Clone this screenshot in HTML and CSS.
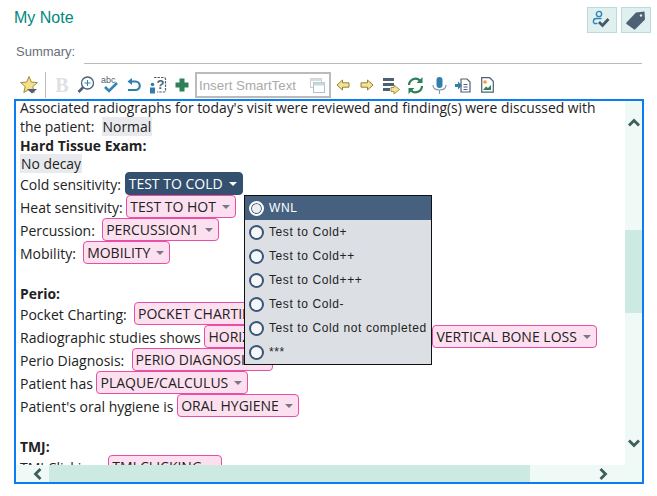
FILE: index.html
```html
<!DOCTYPE html>
<html lang="en">
<head>
    <meta charset="UTF-8">
    <meta name="viewport" content="width=device-width, initial-scale=1.0">
    <title>My Note</title>
    <link rel="stylesheet" href="styles.css">
</head>
<body>

    <header class="note-header">
        <h1>My Note</h1>
        <div class="header-actions">
            <button class="header-btn" type="button">
                <svg width="20" height="20" viewBox="0 0 20 20"><circle cx="7" cy="4" r="2.6" fill="none" stroke="#2f86b5" stroke-width="1.4"/><path d="M1.500 13v-2Q1.500 8.500 4.500 8.500h5" fill="none" stroke="#2f86b5" stroke-width="1.4"/><path d="M1.500 13.500h4" stroke="#2f86b5" stroke-width="1.4"/><path d="M7 12l3.500 3.500 6-6.500" fill="none" stroke="#44566b" stroke-width="2.800"/></svg>
            </button>
            <button class="header-btn" type="button">
                <svg width="22" height="22" viewBox="0 0 22 22"><path d="M1.500 13.500L11 3.500l8.500-1 .5 8-9.500 9.500q-1 1-2 0L1.500 15q-.8-.8 0-1.500z" fill="#4d6076"/><circle cx="16" cy="6.500" r="1.200" fill="#dff0ee"/></svg>
            </button>
        </div>
    </header>

    <div class="summary">
        <label>Summary:</label>
        <div class="summary-line"></div>
    </div>

    <div class="toolbar">
        <span class="tool"><svg width="20" height="20" viewBox="0 0 20 20"><path d="M10 1.500l2.400 5.600 6 .5-4.600 4 1.400 5.900L10 14.400l-5.200 3.100 1.400-5.900-4.600-4 6-.5z" fill="#f5e08a" stroke="#a08c3c"/><path d="M8 14h10l-5 4.500z" fill="#4d6076"/></svg></span>
        <span class="tool-sep"></span>
        <span class="tool tool-bold">B</span>
        <span class="tool"><svg width="18" height="18" viewBox="0 0 18 18"><circle cx="10.500" cy="7" r="6" fill="#fff" stroke="#4d6076" stroke-width="1.300"/><path d="M10.500 4v6M7.500 7h6" stroke="#2f86b5" stroke-width="1.100"/><path d="M6 11.500l-4.500 4.500" stroke="#4d6076" stroke-width="2.600"/></svg></span>
        <span class="tool"><svg width="18" height="20" viewBox="0 0 18 20"><text x="0" y="8" class="abc">abc</text><path d="M4 12l4 4 8-8" fill="none" stroke="#2f86b5" stroke-width="2.600"/></svg></span>
        <span class="tool"><svg width="16" height="16" viewBox="0 0 16 16"><path d="M6 1L1.500 4.500 6 8z" fill="#2f7fae"/><path d="M5 4.500h4.500a4 4 0 010 8.500H2" fill="none" stroke="#2f7fae" stroke-width="2.200"/></svg></span>
        <span class="tool"><svg width="18" height="18" viewBox="0 0 18 18"><path d="M5 1.500h10q1.500 0 1.500 1.500v11.500q0 1.500-1.500 1.500H8" fill="none" stroke="#4d6076" stroke-width="1.200" stroke-dasharray="2.500 1"/><text x="7.500" y="13" class="help">?</text><circle cx="3.500" cy="8.500" r="1.800" fill="#2f7fae"/><path d="M1 11.500h5v6H1z" fill="#2f7fae"/></svg></span>
        <span class="tool"><svg width="14" height="14" viewBox="0 0 14 14"><path d="M4.500 .5h5v4h4v5h-4v4h-5v-4h-4v-5h4z" fill="#2f8058"/></svg></span>

        <div class="smart-input">
            <span class="smart-text">Insert SmartText</span>
            <svg width="15" height="15" viewBox="0 0 15 15"><rect x=".5" y=".5" width="11" height="9" fill="none" stroke="#e6c4bd"/><rect x=".5" y=".5" width="11" height="2.500" fill="#cfe2d8"/><rect x="3.500" y="4.500" width="11" height="10" fill="#fff" stroke="#a9c3d3"/><rect x="3.500" y="4.500" width="11" height="3" fill="#c4d8e4"/></svg>
        </div>

        <span class="tool"><svg width="14" height="12" viewBox="0 0 14 12"><path d="M6.500 1L1 6l5.500 5V8.200h6.500V3.800H6.500z" fill="#f3e39a" stroke="#97802f"/></svg></span>
        <span class="tool"><svg width="14" height="12" viewBox="0 0 14 12"><path d="M7.500 1L13 6l-5.500 5V8.200H1V3.800h6.500z" fill="#f3e39a" stroke="#97802f"/></svg></span>
        <span class="tool"><svg width="17" height="17" viewBox="0 0 17 17"><path d="M0 1h11v3H0zM0 6h11v3H0zM0 11h7v3H0z" fill="#4d6076"/><path d="M11 8l5.500 4.500L11 17v-2.500H8v-4h3z" fill="#f3e39a" stroke="#97802f" stroke-width=".8"/></svg></span>
        <span class="tool"><svg width="17" height="17" viewBox="0 0 17 17"><path d="M2 8a6.500 6.500 0 0111-4.500M15 9a6.500 6.500 0 01-11 4.500" fill="none" stroke="#2f8058" stroke-width="2.200"/><path d="M15.500 0v6h-6zM1.500 17v-6h6z" fill="#2f8058"/></svg></span>
        <span class="tool"><svg width="15" height="17" viewBox="0 0 15 17"><rect x="4.500" y="0" width="6" height="11" rx="3" fill="#2f7fae"/><path d="M1 8q0 5 6.500 5T14 8M7.500 13v4" fill="none" stroke="#8a97a5" stroke-width="1.200"/></svg></span>
        <span class="tool"><svg width="16" height="15" viewBox="0 0 16 15"><path d="M6 1h6l3 3v10H6z" fill="#fff" stroke="#4d6076" stroke-width="1.200"/><path d="M8.500 6.500h4M8.500 9h4M8.500 11.500h4" stroke="#4d6076"/><path d="M0 6h3V3.500L7 7.500 3 11.500V9H0z" fill="#2f7fae"/></svg></span>
        <span class="tool"><svg width="13" height="16" viewBox="0 0 13 16"><path d="M.7.7h8l3.600 3.500v11H.7z" fill="#fff" stroke="#4d6076" stroke-width="1.200"/><circle cx="4" cy="5" r="1.800" fill="#f0a030"/><path d="M2 13l3-3.500 2 1.500 3-3v5z" fill="#2f8058"/></svg></span>
    </div>

    <div class="editor">
        <div class="note-body">
            <div class="note-text">
                <div class="line">Associated radiographs for today's visit were reviewed and finding(s) were discussed with</div>
                <div class="line">the patient:&nbsp; <span class="filled">Normal</span></div>
                <div class="line"><b>Hard Tissue Exam:</b></div>
                <div class="line"><span class="filled">No decay</span></div>
                <div class="row">Cold sensitivity: <span class="chip chip-active">TEST TO COLD</span></div>
                <div class="row">Heat sensitivity: <span class="chip">TEST TO HOT</span></div>
                <div class="row">Percussion:&nbsp; <span class="chip">PERCUSSION1</span></div>
                <div class="row">Mobility:&nbsp; <span class="chip">MOBILITY</span></div>
                <div class="blank"></div>
                <div class="line"><b>Perio:</b></div>
                <div class="row">Pocket Charting:&nbsp; <span class="chip">POCKET CHARTING</span></div>
                <div class="row">Radiographic studies shows <span class="chip chip-wide">HORIZONTAL BONE LOSS</span> <span class="chip">VERTICAL BONE LOSS</span></div>
                <div class="row">Perio Diagnosis:&nbsp; <span class="chip">PERIO DIAGNOSIS</span></div>
                <div class="row">Patient has <span class="chip">PLAQUE/CALCULUS</span></div>
                <div class="row">Patient's oral hygiene is <span class="chip">ORAL HYGIENE</span></div>
                <div class="blank"></div>
                <div class="line"><b>TMJ:</b></div>
                <div class="row">TMJ Clicking:&nbsp; <span class="chip">TMJ CLICKING</span></div>
            </div>
        </div>

        <div class="vscroll">
            <svg class="arrow-up" width="12" height="9" viewBox="0 0 12 9"><path d="M1 7.500l5-5 5 5" fill="none" stroke="#3f5f5a" stroke-width="2.800"/></svg>
            <div class="vthumb"></div>
            <svg class="arrow-down" width="12" height="9" viewBox="0 0 12 9"><path d="M1 1.500l5 5 5-5" fill="none" stroke="#3f5f5a" stroke-width="2.800"/></svg>
        </div>
        <div class="hscroll">
            <svg class="arrow-left" width="9" height="12" viewBox="0 0 9 12"><path d="M7.500 1l-5 5 5 5" fill="none" stroke="#3f5f5a" stroke-width="2.800"/></svg>
            <div class="hthumb"></div>
            <svg class="arrow-right" width="9" height="12" viewBox="0 0 9 12"><path d="M1.500 1l5 5-5 5" fill="none" stroke="#3f5f5a" stroke-width="2.800"/></svg>
        </div>
        <div class="corner"></div>

        <ul class="smart-menu">
            <li class="selected"><span class="radio"></span>WNL</li>
            <li><span class="radio"></span>Test to Cold+</li>
            <li><span class="radio"></span>Test to Cold++</li>
            <li><span class="radio"></span>Test to Cold+++</li>
            <li><span class="radio"></span>Test to Cold-</li>
            <li><span class="radio"></span>Test to Cold not completed</li>
            <li><span class="radio"></span>***</li>
        </ul>
    </div>

</body>
</html>
```

FILE: styles.css
```css
* {
    box-sizing: border-box;
}

body {
    margin: 0;
    font-family: "Liberation Sans", Arial, sans-serif;
    background-color: #fff;
}

.note-header {
    display: flex;
    justify-content: space-between;
    height: 45px;
    padding: 7px 6px 0 14px;
}

.note-header h1 {
    margin: 2px 0 0;
    font-size: 16px;
    line-height: 18px;
    font-weight: normal;
    color: #00897b;
}

.header-actions {
    display: flex;
    gap: 4px;
}

.header-btn {
    display: flex;
    align-items: center;
    justify-content: center;
    width: 30px;
    height: 26px;
    padding: 0;
    border: 1px solid #bcd9dd;
    background-color: #dff0ee;
}

.summary {
    display: flex;
    height: 19px;
    padding: 0 15px 0 16px;
}

.summary label {
    width: 68px;
    font-size: 13px;
    line-height: 13px;
    color: #666e7a;
}

.summary-line {
    flex: 1;
    border-bottom: 1px solid #bbb;
}

.toolbar {
    display: flex;
    align-items: center;
    height: 26px;
    margin: 8px 0 1px;
    padding-left: 17px;
}

.tool {
    display: flex;
    align-items: center;
    justify-content: center;
    width: 24px;
    height: 24px;
    flex: none;
}

.tool-sep {
    width: 1px;
    height: 26px;
    margin: 0 4px 0 4px;
    background-color: #bbb;
}

.tool-bold {
    font-family: "Liberation Serif", serif;
    font-size: 20px;
    font-weight: bold;
    color: #dde0e5;
}

.abc {
    font-family: "Liberation Sans", sans-serif;
    font-size: 9px;
    fill: #4d6076;
}

.help {
    font-family: "Liberation Sans", sans-serif;
    font-size: 13px;
    font-weight: bold;
    fill: #4d6076;
}

.smart-input {
    display: flex;
    align-items: center;
    justify-content: space-between;
    width: 136px;
    height: 26px;
    margin-left: 1px;
    padding: 0 4px 0 2px;
    border: 2px solid #bbb;
    font-size: 13.33px;
    color: #aaa;
}

.editor {
    position: relative;
    display: grid;
    grid-template-columns: 609px 17px;
    grid-template-rows: 364px 17px;
    width: 630px;
    height: 385px;
    margin-left: 14px;
    border: 2px solid #0a7cf5;
}

.note-body {
    overflow: hidden;
}

.note-text {
    margin-top: -4px;
    padding-left: 4px;
    font-family: "Open Sans", sans-serif;
    font-size: 13.88px;
    color: #222;
    white-space: nowrap;
}

.line {
    height: 18.75px;
    line-height: 21px;
}

.blank {
    height: 19.25px;
}

.row {
    display: flex;
    align-items: center;
    height: 23px;
    padding-top: 2px;
    font-size: 14px;
    white-space: pre;
}

.filled {
    display: inline-block;
    height: 19px;
    line-height: 19px;
    padding: 0 1px;
    background-color: #e8eaed;
}

.chip {
    display: inline-flex;
    align-items: center;
    height: 23px;
    margin-top: -2px;
    padding: 0 3px;
    border: 1px solid #e84ea5;
    border-radius: 4px;
    background-color: #fde0f0;
}

.chip::after {
    content: "";
    margin: 1px 2px 0 6px;
    border-top: 4px solid #778;
    border-left: 4px solid transparent;
    border-right: 4px solid transparent;
}

/* runs on under the menu, its end does not show */
.chip-wide {
    justify-content: space-between;
    width: 228px;
}

.chip-active {
    border-color: #34506f;
    background-color: #34506f;
    color: #fff;
}

.chip-active::after {
    border-top-color: #fff;
}

.vscroll {
    position: relative;
    background-color: #eff9f6;
}

.vthumb {
    position: absolute;
    top: 129px;
    width: 100%;
    height: 83px;
    background-color: #cdeae2;
}

.arrow-up {
    position: absolute;
    top: 17px;
    left: 3px;
}

.arrow-down {
    position: absolute;
    top: 338px;
    left: 3px;
}

.hscroll {
    position: relative;
    background-color: #eff9f6;
}

.hthumb {
    position: absolute;
    left: 33px;
    width: 481px;
    height: 100%;
    background-color: #cdeae2;
}

.arrow-left {
    position: absolute;
    top: 3px;
    left: 17px;
}

.arrow-right {
    position: absolute;
    top: 3px;
    left: 583px;
}

.corner {
    background-color: #eff9f6;
}

.smart-menu {
    position: absolute;
    top: 94px;
    left: 228px;
    width: 188px;
    height: 170px;
    margin: 0;
    padding: 0;
    list-style: none;
    border: 1px solid #111;
    background-color: #dce0e4;
    font-size: 12px;
    letter-spacing: .6px;
    color: #222;
}

.smart-menu li {
    display: flex;
    align-items: center;
    height: 24px;
    padding-left: 4px;
}

.smart-menu .selected {
    background-color: #46617f;
    color: #fff;
}

.radio {
    width: 15px;
    height: 15px;
    margin-right: 5px;
    border: 2px solid #3a5578;
    border-radius: 50%;
    background-color: #f4f6f8;
}

.selected .radio {
    border-color: #fff;
    background-color: #eef1f4;
    box-shadow: inset 0 0 0 1px #46617f;
}
```
